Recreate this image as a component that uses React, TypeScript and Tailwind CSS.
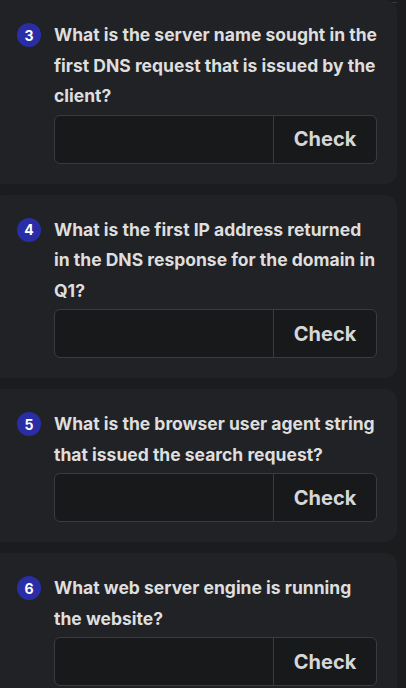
import { useState } from "react";

type Question = {
  id: number;
  text: string;
};

const questions: Question[] = [
  { id: 3, text: "What is the server name sought in the first DNS request that is issued by the client?" },
  { id: 4, text: "What is the first IP address returned in the DNS response for the domain in Q1?" },
  { id: 5, text: "What is the browser user agent string that issued the search request?" },
  { id: 6, text: "What web server engine is running the website?" },
];

function QuestionCard({ q }: { q: Question }) {
  const [answer, setAnswer] = useState("");

  return (
    <div className="ml-[-8px] w-[405px] rounded-xl bg-[#212225] pb-5 pl-[25px] pr-5 pt-5">
      <div className="flex items-start gap-[13px]">
        <span className="mt-[3px] flex h-6 w-6 shrink-0 items-center justify-center rounded-full bg-[#2a2ea6] text-[14px] font-bold text-white">
          {q.id}
        </span>
        <p className="text-[17.5px] font-bold leading-[30.5px] text-[#dedede]">{q.text}</p>
      </div>
      <div className="ml-[37px] mt-[3px] flex h-[49px] overflow-hidden rounded-md border border-[#3a3b3f] bg-[#18191b]">
        <input
          value={answer}
          onChange={(e) => setAnswer(e.target.value)}
          className="min-w-0 flex-1 bg-transparent px-3 text-base text-[#dedede] outline-none"
        />
        <button
          type="button"
          className="w-[103px] border-l border-[#3a3b3f] text-[20px] font-bold text-[#d6d6d6]"
        >
          Check
        </button>
      </div>
    </div>
  );
}

export default function App() {
  return (
    <div
      className="h-[688px] w-[406px] overflow-hidden bg-[#1b1c1e]"
      style={{ fontFamily: "Inter, 'Noto Sans', sans-serif" }}
    >
      <div className="h-[3px] w-[397px] border-b border-[#3a3b3e]" />
      <div className="mt-[-3px] flex flex-col gap-[11px]">
        {questions.map((q) => (
          <QuestionCard key={q.id} q={q} />
        ))}
      </div>
    </div>
  );
}
